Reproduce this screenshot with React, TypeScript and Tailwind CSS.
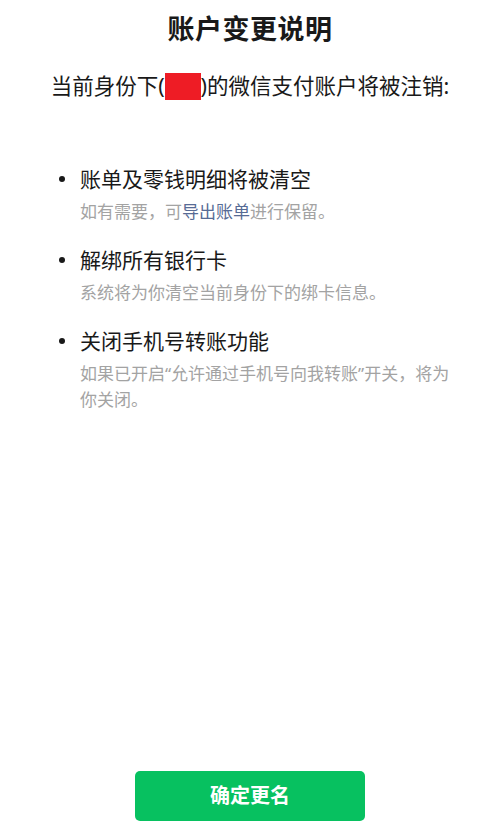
import React from 'react';

const items = [
  {
    title: '账单及零钱明细将被清空',
    desc: (
      <>
        如有需要，可<span className="text-[#576b95]">导出账单</span>进行保留。
      </>
    ),
  },
  {
    title: '解绑所有银行卡',
    desc: <>系统将为你清空当前身份下的绑卡信息。</>,
  },
  {
    title: '关闭手机号转账功能',
    desc: <>如果已开启“允许通过手机号向我转账”开关，将为你关闭。</>,
  },
];

const App: React.FC = () => {
  return (
    <div
      className="min-h-[826px] w-[500px] bg-white flex flex-col items-center text-[#191919]"
      style={{ fontFamily: '"Noto Sans", "Noto Sans CJK SC", sans-serif' }}
    >
      {/* Header */}
      <h1 className="mt-[11px] text-[27px] leading-[36px] font-bold tracking-[0.5px]">账户变更说明</h1>
      <p className="mt-[24px] text-[21.5px] leading-[30px] flex items-center">
        当前身份下(
        <span className="inline-block w-[36px] h-[27px] bg-[#ee1c25]"></span>
        )的微信支付账户将被注销:
      </p>

      {/* Items */}
      <ul className="mt-[62px] w-full pl-[59px] pr-[36px] flex flex-col gap-[19px]">
        {items.map((item, i) => (
          <li key={i} className="flex">
            <span className="w-[6px] h-[6px] rounded-full bg-[#191919] mt-[13px] shrink-0"></span>
            <div className="ml-[15px]">
              <p className="text-[21px] leading-[32px]">{item.title}</p>
              <p className="mt-[4px] text-[17px] leading-[26px] text-[#a3a3a3]">{item.desc}</p>
            </div>
          </li>
        ))}
      </ul>

      {/* Bottom button */}
      <div className="mt-auto mb-[5px]">
        <button className="w-[230px] h-[50px] rounded-[5px] bg-[#07c160] text-white text-[20px] font-bold">
          确定更名
        </button>
      </div>
    </div>
  );
};

export default App;
